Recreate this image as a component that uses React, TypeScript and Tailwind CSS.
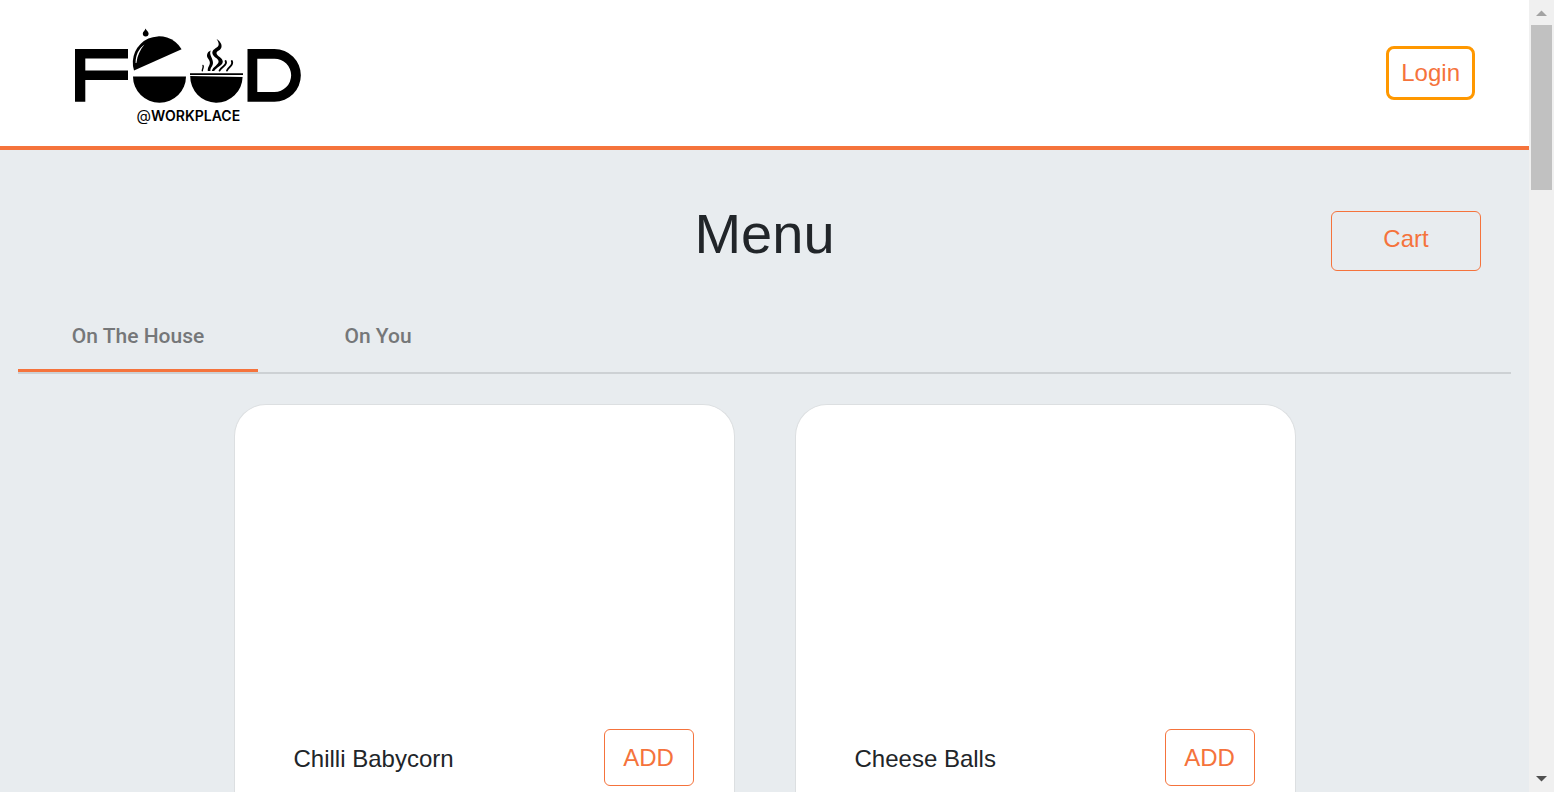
import { useState } from 'react';

const tabs = ['On The House', 'On You'];
const dishes = ['Chilli Babycorn', 'Cheese Balls'];

function Logo() {
  return (
    <svg className="h-[100px] w-[230px]" viewBox="73 23 230 100" overflow="visible" role="img" aria-label="Food at workplace">
      <path d="M75 49H128V58.5H85.3V70.5H128V80H85.3V101.7H75Z" />
      <path d="M145.600 28.500C146.300 30.500 148.600 31.800 148.600 33.600A2.900 2.900 0 0 1 142.800 33.600C142.800 31.800 144.900 30.800 145.600 28.500Z" />
      <path d="M134 70.400A26.200 26.200 0 0 1 181.600 49.300Z" />
      <path d="M135.600 63C135.600 55 138.500 49 144.500 44.600C140 50 137.400 55.500 136.400 63Z" fill="#fff" />
      <path d="M133 76.500H186A26.500 26.200 0 0 1 133 76.500Z" />
      <path d="M190 73.200H243V75H190Z" />
      <path d="M190.200 76L242.600 77A26.200 26.200 0 0 1 190.200 76Z" />
      <path d="M216.500 39C220 41 222.500 44.500 221.300 47.800C220 51 216.500 51 216.500 53.300C216.800 56.500 222.800 57.500 222.800 61.800C222.500 66 216 67.500 214.200 71H211.800C213 66.500 218.500 65 218.600 61.500C218.500 58 212.200 57 212.300 52.500C212.500 48.500 218.500 48 218.700 44.500C218.800 42.500 217.800 40.800 216.500 39Z" />
      <path d="M210.800 50.500C208.500 54.500 213.200 58.500 213 63C212.800 66.500 210.200 67.500 210.400 71H207.800C207.500 66.500 210.300 65.500 209.800 62C209.300 59 206.700 58 207 55C207.300 52.600 208.800 51.200 210.800 50.500Z" />
      <g fill="none" stroke="#000" strokeLinecap="round">
        <path strokeWidth="1.900" d="M225.600 61C228 65.500 221.500 66 219.600 70.500M231.800 61C234 65.500 228.500 66.500 227 70.500" />
        <path strokeWidth="1.400" d="M203 65.500C204 67.500 202.300 68.500 202.300 70.700" />
      </g>
      <path fillRule="evenodd" d="M247.500 49H274.500A26.300 26.300 0 0 1 274.500 101.700H247.500ZM257.300 58.700V92H274.500A16.600 16.600 0 0 0 274.500 58.700Z" />
      <text x="136.500" y="121" className="font-['Inter',sans-serif] text-[14px] font-semibold">
        <tspan className="text-[15px] font-normal">@</tspan>WORKPLACE
      </text>
    </svg>
  );
}

export default function App() {
  const [active, setActive] = useState(0);
  return (
    <div className="flex h-screen overflow-hidden bg-[#e8ecef] font-['Liberation_Sans',Arial,sans-serif] text-2xl text-[#212529]">
      <div className="min-w-0 flex-1">
        <header className="flex h-[150px] items-center justify-between border-b-4 border-[#f5733c] bg-white pr-[54px] pl-[73px]">
          <Logo />
          <button className="h-[54px] rounded-lg border-3 border-[#ff9800] px-3 text-[#f5733c]">Login</button>
        </header>
        <main className="px-[18px]">
          <div className="grid grid-cols-[1fr_auto_1fr] items-start pt-[52px]">
            <h1 className="col-start-2 text-[56px] leading-[64px]">Menu</h1>
            <button className="mt-[9px] mr-[30px] h-[60px] w-[150px] justify-self-end rounded-md border border-[#f5733c] pb-1 text-[#f5733c]">Cart</button>
          </div>
          <div role="tablist" className="mt-7 flex border-b-2 border-[#cdd1d4] font-['Roboto',sans-serif] text-[21px] font-medium text-[#757779]">
            {tabs.map((t, i) => (
              <button
                key={t}
                role="tab"
                aria-selected={i === active}
                onClick={() => setActive(i)}
                className={`h-[73px] w-60 border-b-3 pt-1 ${i === active ? 'border-[#f5733c]' : 'border-transparent'}`}
              >
                {t}
              </button>
            ))}
          </div>
          <div className="flex justify-center gap-[60px] pt-[30px]">
            {dishes.map((d) => (
              <article key={d} className="flex h-[420px] w-[501px] flex-col rounded-t-[32px] border border-b-0 border-[#dcdfe1] bg-white pr-10 pl-[59px]">
                <div className="h-[324px]" />
                <div className="flex items-center justify-between">
                  <h2 className="pt-0.5">{d}</h2>
                  <button className="h-[57px] w-[90px] rounded-md border border-[#f5733c] text-[#f5733c]">ADD</button>
                </div>
              </article>
            ))}
          </div>
        </main>
      </div>
      <div aria-hidden="true" className="flex w-[25px] flex-col items-center bg-[#f0f0f0]">
        <svg className="h-[25px] w-[25px]" viewBox="0 0 25 25"><path d="M7 16L12.500 10.500L18 16Z" fill="#a3a3a3" /></svg>
        <div className="h-[165px] w-[21px] bg-[#c1c1c1]" />
        <svg className="mt-auto h-[25px] w-[25px]" viewBox="0 0 25 25"><path d="M7 9L12.500 14.500L18 9Z" fill="#505050" /></svg>
      </div>
    </div>
  );
}
